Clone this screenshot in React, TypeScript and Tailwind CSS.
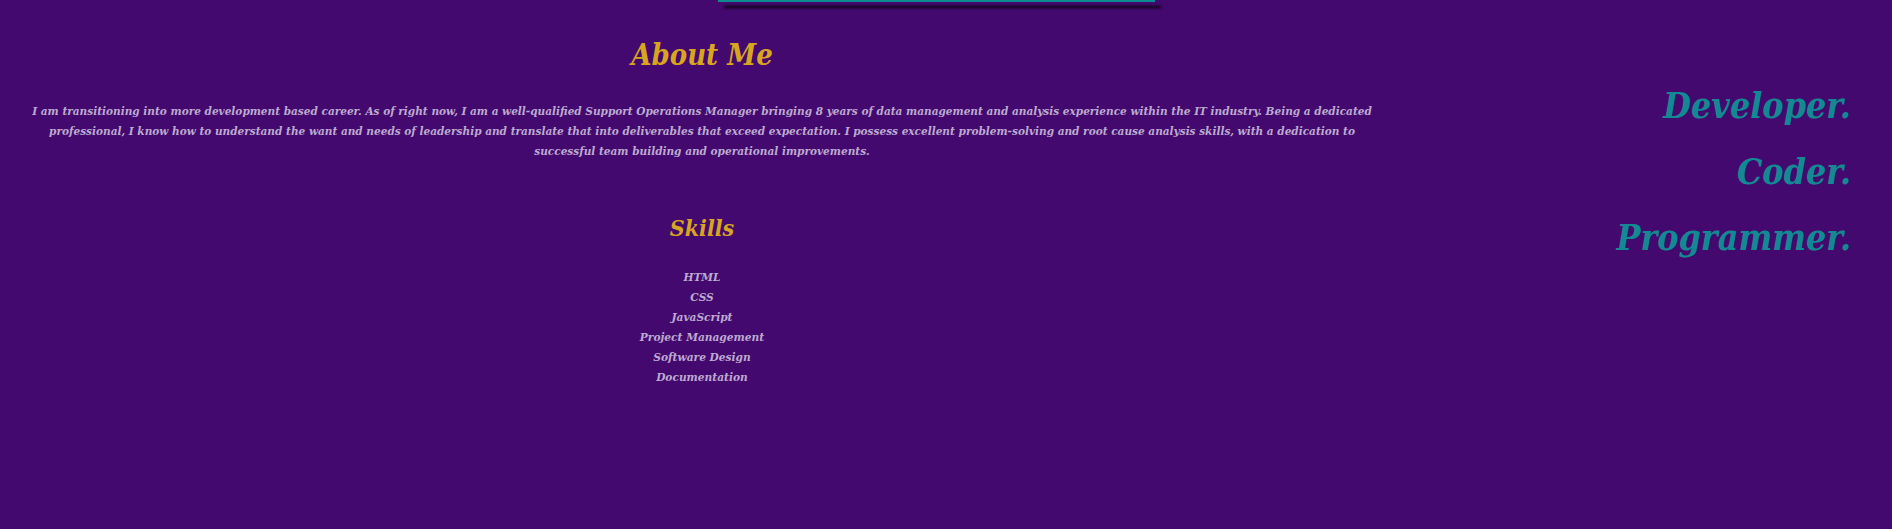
import React from "react";

const skills = [
  "HTML",
  "CSS",
  "JavaScript",
  "Project Management",
  "Software Design",
  "Documentation",
];

const roles = ["Developer.", "Coder.", "Programmer."];

export default function App() {
  return (
    <div className="min-h-[529px] w-full bg-[#43096e] font-['DejaVu_Serif_Condensed','DejaVu_Serif',serif] font-stretch-condensed font-bold italic">
      <div className="ml-[718px] h-[2px] w-[437px] bg-[#0e8b8f] shadow-[6px_6px_3px_#000]" />
      <div className="flex">
        <div className="flex w-[1404px] flex-col items-center">
          <h2 className="mt-[33px] text-[29px] leading-[40px] text-[#d8a521]">About Me</h2>
          <p className="mt-[26px] w-[1368px] text-center text-[11.7px] leading-[20px] text-[#bcaad0]">
            I am transitioning into more development based career. As of right now, I am a well-qualified Support
            Operations Manager bringing 8 years of data management and analysis experience within the IT industry.
            Being a dedicated professional, I know how to understand the want and needs of leadership and translate
            that into deliverables that exceed expectation. I possess excellent problem-solving and root cause
            analysis skills, with a dedication to successful team building and operational improvements.
          </p>
          <h2 className="mt-[47px] text-[23px] leading-[40px] text-[#d8a521]">Skills</h2>
          <ul className="mt-[19px] text-center text-[11.8px] leading-[20px] text-[#bcaad0]">
            {skills.map((s) => (
              <li key={s}>{s}</li>
            ))}
          </ul>
        </div>
        <div className="flex flex-1 flex-col items-end pr-[41px] pt-[71px]">
          {roles.map((r) => (
            <h1 key={r} className="text-[35.5px] leading-[66px] text-[#138a93]">
              {r}
            </h1>
          ))}
        </div>
      </div>
    </div>
  );
}
